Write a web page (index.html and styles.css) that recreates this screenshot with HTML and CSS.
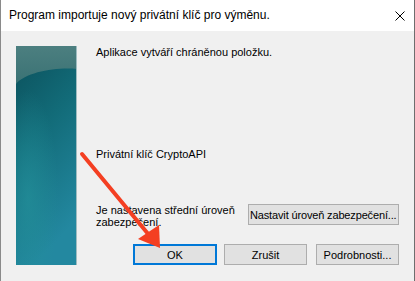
FILE: index.html
```html
<!DOCTYPE html>
<html lang="cs">
<head>
    <meta charset="UTF-8">
    <title>Program importuje nový privátní klíč pro výměnu.</title>
    <link rel="stylesheet" href="styles.css">
</head>
<body>
    <div class="window">
        <div class="titlebar">
            <span class="title">Program importuje nový privátní klíč pro výměnu.</span>
            <svg class="close" width="10" height="10" viewBox="0 0 10 10">
                <path d="M0.5 0.5 L9.5 9.5 M9.5 0.5 L0.5 9.5" stroke="#000" stroke-width="1" fill="none"/>
            </svg>
        </div>
        <div class="main">
            <svg class="banner" width="61" height="219" viewBox="0 0 61 219">
                <defs>
                    <linearGradient id="g1" x1="0" y1="0" x2="0.3" y2="1">
                        <stop offset="0" stop-color="#0b4f5a"/>
                        <stop offset="0.45" stop-color="#126b78"/>
                        <stop offset="1" stop-color="#2388a0"/>
                    </linearGradient>
                    <linearGradient id="g2" x1="0" y1="0" x2="0" y2="1">
                        <stop offset="0" stop-color="#4c7f80"/>
                        <stop offset="1" stop-color="#3a7274"/>
                    </linearGradient>
                    <radialGradient id="g3" cx="0.2" cy="0.7" r="0.5">
                        <stop offset="0" stop-color="#23909a" stop-opacity="0.7"/>
                        <stop offset="1" stop-color="#23909a" stop-opacity="0"/>
                    </radialGradient>
                </defs>
                <rect width="61" height="219" fill="url(#g1)"/>
                <rect width="61" height="219" fill="url(#g3)"/>
                <path d="M0 0 H61 V23 C40 21 10 26 0 38 Z" fill="url(#g2)"/>
                <rect x="60" y="0" width="1" height="219" fill="#9fbcc0"/>
            </svg>
            <div class="content">
                <p class="line first">Aplikace vytváří chráněnou položku.</p>
                <p class="line key">Privátní klíč CryptoAPI</p>
                <div class="level">
                    <p class="line">Je nastavena střední úroveň<br>zabezpečení.</p>
                    <button class="btn wide">Nastavit úroveň zabezpečení...</button>
                </div>
                <div class="actions">
                    <button class="btn default">OK</button>
                    <button class="btn cancel">Zrušit</button>
                    <button class="btn">Podrobnosti...</button>
                </div>
            </div>
        </div>
        <svg class="arrow" width="415" height="281" viewBox="0 0 415 281">
            <path d="M81 154 L148 235" stroke="#f43f22" stroke-width="4" stroke-linecap="round" fill="none"/>
            <path d="M137 239 L158 225 L159 248 Z" fill="#f43f22"/>
        </svg>
    </div>
</body>
</html>
```

FILE: styles.css
```css
html, body {
    margin: 0;
    padding: 0;
}
body {
    font-family: "Liberation Sans", Arial, sans-serif;
    font-size: 11px;
    color: #000;
    background: #f0f0f0;
}
.window {
    position: relative;
    width: 415px;
    height: 281px;
    box-sizing: border-box;
    border-left: 1px solid #8a8a8a;
    border-right: 1px solid #6e6e6e;
    background: #f0f0f0;
    overflow: hidden;
}
.titlebar {
    height: 31px;
    background: #fff;
    display: flex;
    align-items: center;
    justify-content: space-between;
    padding: 0 9px 2px 8px;
    box-sizing: border-box;
}
.title {
    font-family: "Liberation Sans", Arial, sans-serif;
    font-size: 12px;
}
.close {
    margin-top: 3px;
}
.main {
    display: flex;
    padding: 15px 0 0 15px;
}
.banner {
    flex: none;
    display: block;
}
.content {
    margin-left: 19px;
    width: 303px;
}
.line {
    margin: 0;
    line-height: 12px;
}
.first {
    margin-top: 0;
}
.key {
    margin-top: 90px;
}
.level {
    display: flex;
    justify-content: space-between;
    align-items: flex-start;
    margin-top: 43px;
}
.level .line {
    margin-top: 1px;
}
.btn {
    font-family: "Liberation Sans", Arial, sans-serif;
    font-size: 11px;
    color: #000;
    background: #e1e1e1;
    border: 1px solid #adadad;
    height: 21px;
    width: 83px;
    padding: 0;
    margin: 0;
    box-sizing: border-box;
    white-space: nowrap;
}
.wide {
    width: 151px;
    margin-top: 1px;
    padding: 0 1px;
    text-align: left;
    letter-spacing: -0.15px;
    overflow: hidden;
}
.actions {
    display: flex;
    justify-content: flex-end;
    margin-top: 16px;
}
.default {
    width: 84px;
    margin-right: 7px;
    border: 2px solid #0078d7;
}
.cancel {
    margin-right: 9px;
}
.arrow {
    position: absolute;
    left: 0;
    top: 0;
    pointer-events: none;
}
```
